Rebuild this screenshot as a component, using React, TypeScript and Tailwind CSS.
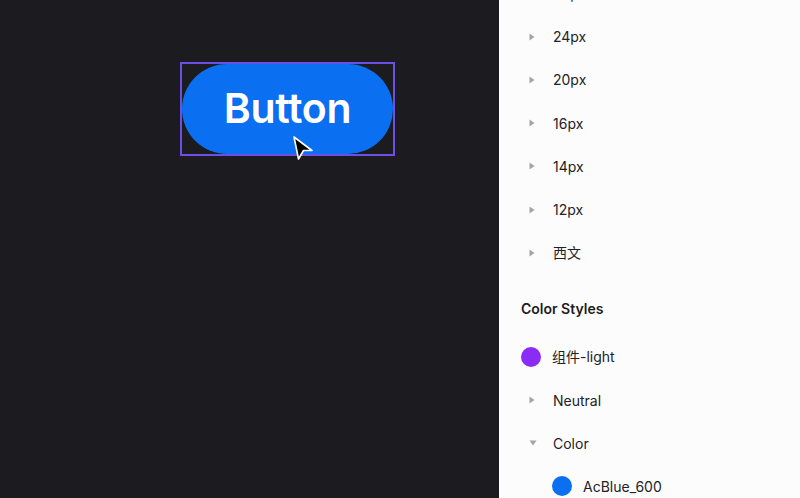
import React from "react";

const Tri = ({ down = false }: { down?: boolean }) =>
  down ? (
    <svg width="8" height="6" viewBox="0 0 8 6" className="shrink-0">
      <path d="M0.5 0.5 L7.5 0.5 L4 5.5 Z" fill="#a3a3a8" />
    </svg>
  ) : (
    <svg width="6" height="8" viewBox="0 0 6 8" className="shrink-0">
      <path d="M0.5 0.5 L5.5 4 L0.5 7.5 Z" fill="#a3a3a8" />
    </svg>
  );

const GroupRow = ({ label, down = false }: { label: string; down?: boolean }) => (
  <div className="h-[43.2px] flex items-center pl-[30px]">
    <div className="w-[24px] flex items-center">
      <Tri down={down} />
    </div>
    <span className="text-[14px] text-[#222226]">{label}</span>
  </div>
);

export default function App() {
  return (
    <div
      className="w-[800px] h-[498px] flex overflow-hidden"
      style={{ fontFamily: 'Inter, "Noto Sans CJK SC", sans-serif' }}
    >
      <div className="w-[499px] h-full bg-[#1c1b20] relative">
        <div className="pl-[180px] pt-[62px]">
          <div className="w-[215px] h-[94px] border-2 border-[#6c4fe6] p-0 relative">
            <div className="w-full h-full rounded-full bg-[#0a6ff1] flex items-center justify-center">
              <span className="text-white text-[41px] font-semibold tracking-[-0.3px] leading-none pb-[2px]">
                Button
              </span>
            </div>
            <svg
              width="24"
              height="28"
              viewBox="-2 -2 24 28"
              className="absolute left-[110px] top-[71px]"
            >
              <path
                d="M0 0 L18 13.5 L9.5 13.5 L4.5 22 Z"
                fill="#000"
                stroke="#fff"
                strokeWidth="1.6"
                strokeLinejoin="round"
              />
            </svg>
          </div>
        </div>
      </div>
      <div className="w-[301px] h-full bg-[#fcfcfd] flex flex-col">
        <div className="mt-[-28px]">
          <GroupRow label="28px" />
          <GroupRow label="24px" />
          <GroupRow label="20px" />
          <GroupRow label="16px" />
          <GroupRow label="14px" />
          <GroupRow label="12px" />
          <GroupRow label="西文" />
        </div>
        <div className="mt-[24.6px] h-[20px] flex items-center pl-[22px] text-[14px] font-semibold text-[#1c1c20]">
          Color Styles
        </div>
        <div className="mt-[16.4px]">
          <div className="h-[43.2px] flex items-center pl-[22px]">
            <div className="w-[20px] h-[20px] rounded-full bg-[#8a2cf6] mr-[11px]" />
            <span className="text-[14px] text-[#222226]">组件-light</span>
          </div>
          <GroupRow label="Neutral" />
          <GroupRow label="Color" down />
          <div className="h-[43.2px] flex items-center pl-[53px]">
            <div className="w-[20px] h-[20px] rounded-full bg-[#0a6ff1] mr-[11px]" />
            <span className="text-[14px] text-[#222226]">AcBlue_600</span>
          </div>
        </div>
      </div>
    </div>
  );
}
